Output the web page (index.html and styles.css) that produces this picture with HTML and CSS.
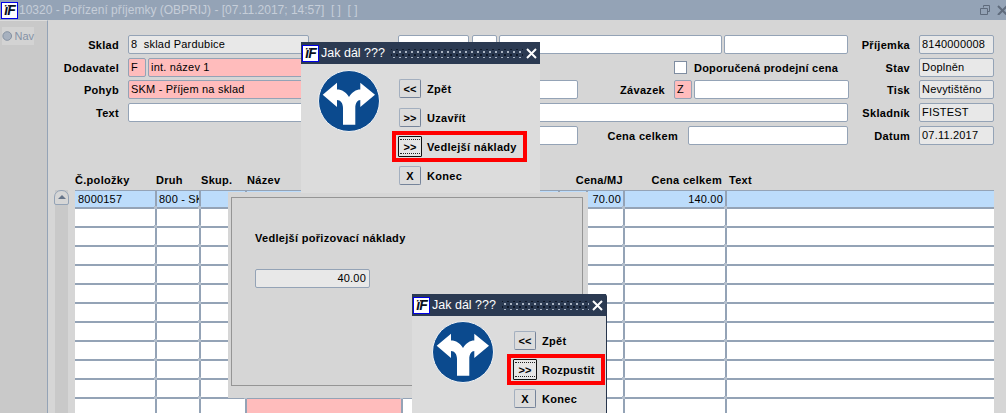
FILE: index.html
```html
<!DOCTYPE html>
<html lang="cs">
<head>
    <meta charset="UTF-8">
    <meta name="viewport" content="width=device-width, initial-scale=1.0">
    <title>Pořízení příjemky</title>
    <link rel="stylesheet" href="styles.css">
</head>
<body>
    <svg class="defs" width="0" height="0">
        <symbol id="fork" viewBox="0 0 62 62">
            <circle cx="31" cy="31" r="30.5" fill="#0b4a8e" stroke="#f2f4f6" stroke-width="1"/>
            <path fill="#fff" d="M31 27C28 22 24 19.5 19 19.5L19 12.7 4.7 24.7 19 37 19 30C22.5 30 25 33 25 38L25 54.7 37.3 54.7 37.3 38C37.3 33 39.5 30 42.3 30L42.3 37 57 24.7 42.3 12.7 42.3 19.5C38 19.5 34 22 31 27Z"/>
        </symbol>
    </svg>

    <header class="titlebar">
        <span class="logo">ïF</span>
        <span class="title-text">10320 - Pořízení příjemky (OBPRIJ) - [07.11.2017; 14:57]&nbsp; [ ]&nbsp; [ ]</span>
        <div class="win-btns">
            <svg width="10" height="10" viewBox="0 0 10 10"><path fill="none" stroke="#5f6b7c" d="M3.5 2.5V.5h6v6h-2M.5 3.5h7v6h-7z"/></svg>
            <svg width="10" height="10" viewBox="0 0 10 10"><path stroke="#5f6b7c" stroke-width="2" d="M1 1l9 9M10 1l-9 9"/></svg>
        </div>
    </header>

    <div class="workspace">
        <aside class="nav">
            <div class="nav-item">
                <svg width="12" height="12" viewBox="0 0 12 12"><circle cx="6" cy="6" r="5" fill="#a7b1bf" stroke="#7d8a9c"/></svg>
                <span>Nav</span>
            </div>
        </aside>

        <main class="main">
            <div class="form">
                <div class="form-left">
                    <div class="row">
                        <label class="lbl">Sklad</label>
                        <div class="f gray f-sklad">8&nbsp; sklad Pardubice</div>
                        <div class="f f-doc1"></div>
                        <div class="f f-doc2"></div>
                        <div class="f f-doc3"></div>
                        <div class="f f-doc4"></div>
                    </div>
                    <div class="row">
                        <label class="lbl">Dodavatel</label>
                        <div class="f pink f-code">F</div>
                        <div class="f pink f-name">int. název 1</div>
                        <div class="check"></div>
                        <label class="lbl-check">Doporučená prodejní cena</label>
                    </div>
                    <div class="row">
                        <label class="lbl">Pohyb</label>
                        <div class="f pink f-pohyb">SKM - Příjem na sklad</div>
                        <div class="f f-mid"></div>
                        <label class="lbl lbl-zav">Závazek</label>
                        <div class="f pink f-z">Z</div>
                        <div class="f f-zav"></div>
                    </div>
                    <div class="row">
                        <label class="lbl">Text</label>
                        <div class="f f-text"></div>
                    </div>
                    <div class="row">
                        <label class="lbl"></label>
                        <div class="f f-mid f-mid5"></div>
                        <label class="lbl lbl-cena">Cena celkem</label>
                        <div class="f f-cena"></div>
                    </div>
                </div>
                <div class="form-right">
                    <div class="row"><label class="lbl lbl-r">Příjemka</label><div class="f gray f-r">8140000008</div></div>
                    <div class="row"><label class="lbl lbl-r">Stav</label><div class="f gray f-r">Doplněn</div></div>
                    <div class="row"><label class="lbl lbl-r">Tisk</label><div class="f gray f-r">Nevytištěno</div></div>
                    <div class="row"><label class="lbl lbl-r">Skladník</label><div class="f gray f-r">FISTEST</div></div>
                    <div class="row"><label class="lbl lbl-r">Datum</label><div class="f gray f-r">07.11.2017</div></div>
                </div>
            </div>

            <div class="items">
                <div class="scroller">
                    <div class="scroll-up"></div>
                </div>
                <table class="grid">
                    <colgroup>
                        <col class="c-pol"><col class="c-druh"><col class="c-skup"><col class="c-nazev">
                        <col class="c-a"><col class="c-b"><col class="c-c"><col class="c-mj"><col class="c-cel"><col class="c-txt">
                    </colgroup>
                    <thead>
                        <tr>
                            <th>Č.položky</th><th class="th-druh">Druh</th><th>Skup.</th><th>Název</th>
                            <th></th><th></th>
                            <th class="num th-mj" colspan="2">Cena/MJ</th><th class="num">Cena celkem</th><th class="th-txt">Text</th>
                        </tr>
                    </thead>
                    <tbody>
                        <tr class="current">
                            <td>8000157</td><td class="td-druh"><span class="clip">800 - SKM</span></td><td></td><td></td><td></td><td></td><td></td>
                            <td class="num">70.00</td><td class="num">140.00</td><td></td>
                        </tr>
                        <tr><td></td><td></td><td></td><td></td><td></td><td></td><td></td><td></td><td></td><td></td></tr>
                        <tr><td></td><td></td><td></td><td></td><td></td><td></td><td></td><td></td><td></td><td></td></tr>
                        <tr><td></td><td></td><td></td><td></td><td></td><td></td><td></td><td></td><td></td><td></td></tr>
                        <tr><td></td><td></td><td></td><td></td><td></td><td></td><td></td><td></td><td></td><td></td></tr>
                        <tr><td></td><td></td><td></td><td></td><td></td><td></td><td></td><td></td><td></td><td></td></tr>
                        <tr><td></td><td></td><td></td><td></td><td></td><td></td><td></td><td></td><td></td><td></td></tr>
                        <tr><td></td><td></td><td></td><td></td><td></td><td></td><td></td><td></td><td></td><td></td></tr>
                        <tr><td></td><td></td><td></td><td></td><td></td><td></td><td></td><td></td><td></td><td></td></tr>
                        <tr><td></td><td></td><td></td><td></td><td></td><td></td><td></td><td></td><td></td><td></td></tr>
                        <tr><td></td><td></td><td></td><td></td><td></td><td></td><td></td><td></td><td></td><td></td></tr>
                        <tr><td></td><td></td><td></td><td class="req"></td><td></td><td></td><td></td><td></td><td></td><td></td></tr>
                    </tbody>
                </table>
            </div>
        </main>
    </div>

    <!-- okno s vedlejsimi naklady -->
    <section class="costs">
        <div class="costs-box">
            <div class="costs-label">Vedlejší pořizovací náklady</div>
            <div class="f gray costs-value">40.00</div>
        </div>
    </section>

    <section class="dialog dialog-one">
        <div class="dlg-title">
            <span class="logo logo-small">ïF</span>
            <span class="dlg-name">Jak dál ???</span>
            <span class="grip"></span>
            <svg class="dlg-close" width="11" height="11" viewBox="0 0 11 11"><path stroke="#fff" stroke-width="2" d="M1 1l9 9M10 1l-9 9"/></svg>
        </div>
        <div class="dlg-body">
            <svg class="sign" width="62" height="62"><use href="#fork"/></svg>
            <div class="choices">
                <div class="choice"><button class="btn">&lt;&lt;</button><span>Zpět</span></div>
                <div class="choice"><button class="btn">&gt;&gt;</button><span>Uzavřít</span></div>
                <div class="choice marked"><button class="btn focus">&gt;&gt;</button><span>Vedlejší náklady</span></div>
                <div class="choice"><button class="btn">X</button><span>Konec</span></div>
            </div>
        </div>
    </section>

    <section class="dialog dialog-two">
        <div class="dlg-title">
            <span class="logo logo-small">ïF</span>
            <span class="dlg-name">Jak dál ???</span>
            <span class="grip"></span>
            <svg class="dlg-close" width="11" height="11" viewBox="0 0 11 11"><path stroke="#fff" stroke-width="2" d="M1 1l9 9M10 1l-9 9"/></svg>
        </div>
        <div class="dlg-body">
            <svg class="sign" width="62" height="62"><use href="#fork"/></svg>
            <div class="choices">
                <div class="choice"><button class="btn">&lt;&lt;</button><span>Zpět</span></div>
                <div class="choice marked"><button class="btn focus">&gt;&gt;</button><span>Rozpustit</span></div>
                <div class="choice"><button class="btn">X</button><span>Konec</span></div>
            </div>
        </div>
    </section>
</body>
</html>
```

FILE: styles.css
```css
* {
    box-sizing: border-box;
}

html, body {
    height: 100%;
}

body {
    margin: 0;
    overflow: hidden;
    background-color: #d6d6d6;
    color: #000;
    font-family: "Liberation Sans", Arial, sans-serif;
    font-size: 11px;
}

.defs {
    position: absolute;
}

/* titulek */
.titlebar {
    display: flex;
    align-items: center;
    height: 20px;
    padding-left: 1px;
    background-color: #94a3b6;
}

.logo {
    flex: none;
    display: flex;
    align-items: center;
    justify-content: center;
    width: 17px;
    height: 17px;
    background-color: #fff;
    border: 1px solid #0000e6;
    color: #0a1020;
    font-size: 14px;
    font-weight: bold;
    font-style: italic;
    letter-spacing: -1px;
}

.title-text {
    margin-left: 1px;
    color: #c6ced9;
    font-size: 12px;
    white-space: pre;
}

.win-btns {
    display: flex;
    gap: 7px;
    margin-left: auto;
    margin-right: -1px;
}

.workspace {
    display: flex;
    height: 393px;
}

.nav {
    flex: none;
    width: 48px;
    padding: 6px 0 0 2px;
    background-color: #c9c9c9;
    border-top: 1px solid #dcdcdc;
    border-right: 1px solid #94a3b6;
}

.nav-item {
    display: flex;
    align-items: center;
    gap: 2px;
    width: 32px;
    height: 18px;
    background-color: #d3d3d3;
    color: #8592a6;
}

.main {
    flex: 1;
    min-width: 0;
    padding-top: 15px;
}

/* formular */
.form {
    display: flex;
}

.form-left {
    width: 800px;
}

.row {
    display: flex;
    align-items: center;
    height: 19px;
    margin-bottom: 4px;
}

.row:nth-child(2) {
    margin-bottom: 3px;
}

.lbl {
    flex: none;
    width: 71px;
    margin-right: 9px;
    font-weight: bold;
    letter-spacing: 0.3px;
    text-align: right;
    white-space: nowrap;
}

.f {
    flex: none;
    height: 19px;
    padding-left: 2px;
    line-height: 17px;
    background-color: #fff;
    border: 1px solid #94a3b6;
    border-radius: 2px;
    letter-spacing: 0.2px;
    white-space: nowrap;
    overflow: hidden;
}

.gray {
    background-color: #e8e8e8;
}

.pink {
    background-color: #ffbcbc;
}

.f-sklad { width: 181px; }
.f-doc1 { width: 71px; margin-left: 89px; }
.f-doc2 { width: 25px; margin-left: 3px; }
.f-doc3 { width: 223px; margin-left: 2px; }
.f-doc4 { width: 124px; margin-left: 2px; }

.f-code { width: 18px; }
.f-name { width: 250px; margin-left: 2px; }

.check {
    flex: none;
    width: 13px;
    height: 13px;
    margin-left: 276px;
    background-color: #fff;
    border: 1px solid #7f8da1;
}

.lbl-check {
    margin-left: 7px;
    font-weight: bold;
    letter-spacing: 0.22px;
    white-space: nowrap;
}

.f-pohyb { width: 270px; }
.f-mid { width: 178px; margin-left: 2px; }
.lbl-zav { width: 87px; margin-right: 9px; }
.f-z { width: 18px; }
.f-zav { width: 155px; margin-left: 2px; }
.f-text { width: 720px; }
.f-mid5 { margin-left: 272px; }
.lbl-cena { width: 100px; margin-right: 10px; }
.f-cena { width: 160px; }

.lbl-r { width: 62px; }
.f-r { width: 75px; }

/* polozky */
.items {
    display: flex;
    margin-top: 21px;
    padding-left: 6px;
}

.scroller {
    flex: none;
    width: 15px;
    margin: 20px 6px 0 0;
    background: linear-gradient(#c9c9c9, #c9c9c9) no-repeat 1px 0 / 13px 100%;
}

.scroll-up {
    position: relative;
    width: 15px;
    height: 15px;
    background-color: #d6d6d6;
    border: 1px solid #94a3b6;
    border-radius: 7px 7px 2px 2px;
}

.scroll-up::after {
    content: "";
    position: absolute;
    left: 3px;
    top: 4px;
    border-left: 4px solid transparent;
    border-right: 4px solid transparent;
    border-bottom: 4px solid #66758a;
}

.grid {
    table-layout: fixed;
    width: 919px;
    height: 248px;
    border-collapse: separate;
    border-spacing: 0;
}

.c-pol { width: 82px; }
.c-druh { width: 44px; }
.c-skup { width: 46px; }
.c-nazev { width: 156px; }
.c-a { width: 97px; }
.c-b { width: 60px; }
.c-c { width: 28px; }
.c-mj { width: 37px; }
.c-cel { width: 102px; }
.c-txt { width: 267px; }

.grid th {
    height: 20px;
    padding: 0;
    font-weight: bold;
    letter-spacing: 0.3px;
    text-align: left;
    white-space: nowrap;
}

.grid th.th-druh {
    text-indent: -1px;
}

.grid th.num {
    padding-right: 5px;
    text-align: right;
}

.grid th.th-mj {
    padding-right: 2px;
}

.grid th.th-txt {
    padding-left: 2px;
}

.grid td {
    position: relative;
    height: 19px;
    padding: 0 0 0 3px;
    background-color: #fff;
    border-right: 2px solid #94a3b6;
    border-bottom: 2px solid #94a3b6;
    letter-spacing: 0.2px;
    white-space: nowrap;
}

.grid td.td-druh {
    padding-left: 2px;
}

.grid td:last-child {
    border-right: none;
}

/* krizeni mrizky */
.grid td::after {
    content: "";
    position: absolute;
    right: -2px;
    bottom: -2px;
    width: 3px;
    height: 3px;
    background-color: #b4bfcc;
    z-index: 1;
}

.grid td:last-child::after {
    display: none;
}

.grid .current td {
    background-color: #bcdcfb;
    box-shadow: inset 0 1px #94a3b6;
}

.grid td.num {
    padding: 0 2px 0 0;
    text-align: right;
}

.grid td.req {
    background-color: #ffbcbc;
}

.clip {
    display: block;
    overflow: hidden;
}

/* panel vedlejsich nakladu */
.costs {
    position: absolute;
    z-index: 2;
    left: 228px;
    top: 192px;
    width: 360px;
    height: 206px;
    padding: 5px 5px 12px 3px;
    background-color: #d6d6d6;
}

.costs-box {
    height: 100%;
    padding: 34px 0 0 23px;
    border: 1px solid #959595;
}

.costs-label {
    font-weight: bold;
    letter-spacing: 0.3px;
}

.costs-value {
    width: 115px;
    margin-top: 25px;
    padding-right: 3px;
    text-align: right;
}

/* dialogy */
.dialog {
    position: absolute;
    z-index: 2;
    background-color: #dcdcdc;
}

.dialog-one {
    left: 301px;
    top: 42px;
    width: 239px;
    height: 151px;
}

.dialog-two {
    left: 412px;
    top: 294px;
    width: 195px;
    height: 119px;
    border-right: 1px solid #27354c;
    border-radius: 3px 3px 0 0;
}

.dlg-title {
    display: flex;
    align-items: center;
    height: 22px;
    padding-left: 1px;
    background-color: #2b3a52;
    color: #fff;
}

.dlg-name {
    margin-left: 2px;
    font-size: 12.5px;
    white-space: nowrap;
}

.grip {
    flex: 1;
    height: 9px;
    margin: 0 3px 0 6px;
    background-image: radial-gradient(circle, #aab4c2 0.8px, transparent 1px), radial-gradient(circle, #0f1828 0.8px, transparent 1px);
    background-size: 6px 6px;
    background-position: 0 0, 3px 3px;
}

.dlg-close {
    flex: none;
    margin-right: 3px;
}

.dlg-body {
    display: flex;
    padding: 6px 0 0 17px;
    gap: 19px;
}

.dialog-two .dlg-body {
    padding: 5px 0 0 20px;
    gap: 20px;
}

.sign {
    flex: none;
}

.choices {
    display: flex;
    flex-direction: column;
    gap: 10px;
    margin-top: 9px;
}

.dialog-two .choices {
    margin-top: 10px;
}

.choice {
    position: relative;
    display: flex;
    align-items: center;
    gap: 6px;
    height: 19px;
    font-weight: bold;
    letter-spacing: 0.3px;
    white-space: nowrap;
}

/* cerveny ramecek kolem volby */
.choice.marked::before {
    content: "";
    position: absolute;
    inset: -6px -10px -6px -7px;
    border: 4px solid #f00;
}

.btn {
    position: relative;
    flex: none;
    width: 22px;
    height: 19px;
    padding: 0;
    background-color: #dcdcdc;
    border: 1px solid #a3afbf;
    border-right-color: #76849a;
    border-bottom-color: #76849a;
    border-radius: 2px;
    color: #000;
    font: bold 11px "Liberation Sans", Arial, sans-serif;
}

.btn.focus {
    width: 24px;
    height: 21px;
    margin: 0 -1px;
    background-color: #e6e6e6;
    border-color: #111;
    border-radius: 1px;
}

/* teckovany fokus jen nahore a dole */
.btn.focus::after {
    content: "";
    position: absolute;
    inset: 2px 1px;
    border-top: 1px dotted #222;
    border-bottom: 1px dotted #222;
}
```
